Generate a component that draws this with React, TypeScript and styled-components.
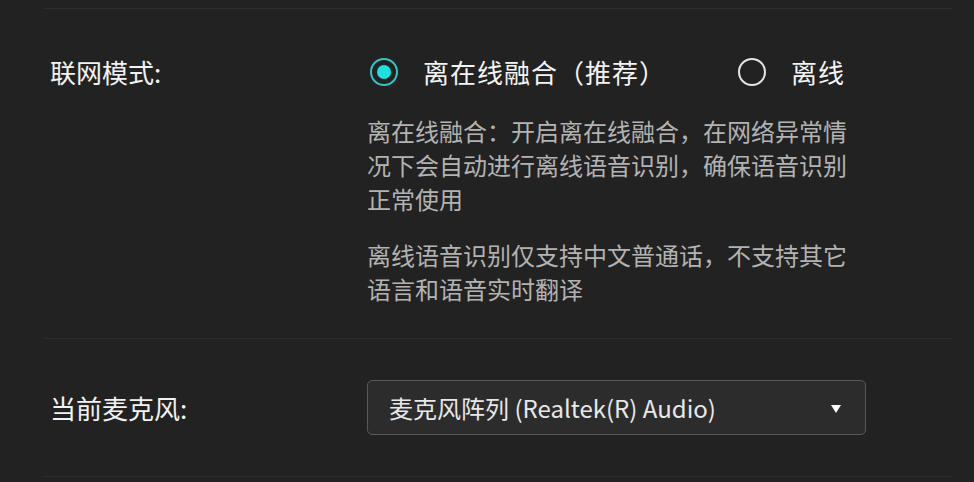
import React from 'react';
import styled, { createGlobalStyle } from 'styled-components';

const GlobalStyle = createGlobalStyle`
    html, body {
        margin: 0;
        padding: 0;
        background: #222222;
    }
    body {
        font-family: "Noto Sans CJK SC", "Noto Sans", sans-serif;
        color: #f0f0f0;
    }
`;

const Page = styled.div`
    width: 974px;
    height: 482px;
    padding-top: 8px;
    box-sizing: border-box;
    background: #222222;
    overflow: hidden;
`;

const Row = styled.div<{ $center?: boolean; $pad: string }>`
    display: flex;
    align-items: ${props => props.$center ? "center" : "flex-start"};
    margin: 0 22px 0 44px;
    padding: ${props => props.$pad};
    border-top: 1px solid #2d2d2d;
    &:last-child {
        border-bottom: 1px solid #2d2d2d;
    }
`;

const Label = styled.div`
    width: 317px;
    flex-shrink: 0;
    padding-left: 6px;
    font-size: 26px;
    line-height: 36px;
    color: #f2f2f2;
`;

const Value = styled.div`
    display: flex;
    flex-direction: column;
`;

const RadioGroup = styled.div`
    display: flex;
    align-items: center;
    gap: 72px;
    margin-left: 3px;
    height: 36px;
`;

const Option = styled.label`
    display: flex;
    align-items: center;
    gap: 25px;
    font-size: 26px;
    line-height: 36px;
    letter-spacing: 1px;
    color: #f4f4f4;
    cursor: pointer;
`;

const Ring = styled.span<{ $checked?: boolean }>`
    width: 28px;
    height: 28px;
    box-sizing: border-box;
    border-radius: 50%;
    border: 2px solid ${props => props.$checked ? "#35c4c6" : "#e6e6e6"};
    display: flex;
    align-items: center;
    justify-content: center;

    &::after {
        content: "";
        display: ${props => props.$checked ? "block" : "none"};
        width: 14px;
        height: 14px;
        border-radius: 50%;
        background: #1be2e0;
    }
`;

const Desc = styled.p`
    width: 484px;
    margin: 24px 0 0 0;
    font-size: 24px;
    line-height: 34px;
    color: #b3b3b3;

    & + & {
        margin-top: 22px;
    }
`;

const Select = styled.div`
    width: 499px;
    height: 55px;
    box-sizing: border-box;
    display: flex;
    align-items: center;
    justify-content: space-between;
    padding: 0 24px 0 21px;
    background: #2c2c2c;
    border: 1px solid #585858;
    border-radius: 5px;
    font-size: 24px;
    color: #e8e8e8;
`;

const Arrow = styled.span`
    width: 0;
    height: 0;
    border-left: 5.5px solid transparent;
    border-right: 5.5px solid transparent;
    border-top: 8px solid #ffffff;
    margin-top: 2px;
`;

export default function App() {
    return (
        <Page>
            <GlobalStyle />
            <Row $pad="45px 0 32px 0">
                <Label>联网模式:</Label>
                <Value>
                    <RadioGroup>
                        <Option><Ring $checked />离在线融合（推荐）</Option>
                        <Option><Ring />离线</Option>
                    </RadioGroup>
                    <Desc>离在线融合：开启离在线融合，在网络异常情况下会自动进行离线语音识别，确保语音识别正常使用</Desc>
                    <Desc>离线语音识别仅支持中文普通话，不支持其它语言和语音实时翻译</Desc>
                </Value>
            </Row>
            <Row $center $pad="41px 0 41px 0">
                <Label>当前麦克风:</Label>
                <Select>
                    <span>麦克风阵列 (Realtek(R) Audio)</span>
                    <Arrow />
                </Select>
            </Row>
        </Page>
    );
}
